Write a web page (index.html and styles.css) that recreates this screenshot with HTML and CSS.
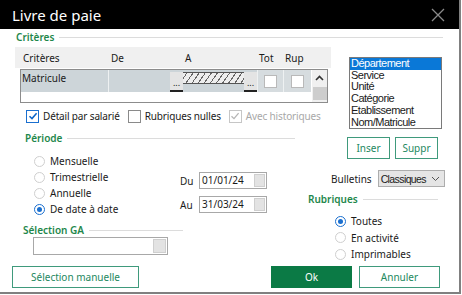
FILE: index.html
```html
<!DOCTYPE html>
<html lang="fr">
<head>
    <meta charset="UTF-8">
    <title>Livre de paie</title>
    <link rel="stylesheet" href="styles.css">
</head>
<body>
    <div class="window">
        <div class="titlebar">
            <span class="title">Livre de paie</span>
            <svg class="close" width="14" height="14" viewBox="0 0 14 14">
                <path d="M1 1 L13 13 M13 1 L1 13" stroke="#8a8a8a" stroke-width="1.3" fill="none"/>
            </svg>
        </div>

        <div class="content">
            <div class="group-head crit-head"><span>Critères</span></div>

            <!-- bloc critères -->
            <div class="block1">
                <div class="left1">
                    <div class="grid-head">
                        <div class="cell">Critères</div>
                        <div class="cell">De</div>
                        <div></div>
                        <div class="cell">A</div>
                        <div></div>
                        <div class="cell">Tot</div>
                        <div class="cell">Rup</div>
                        <div></div>
                    </div>
                    <div class="grid-box">
                        <div class="grid-row">
                            <div class="cell c-name">Matricule</div>
                            <div class="cell c-val"></div>
                            <div class="dots">...</div>
                            <div class="cell c-hatch"><div class="hatch"></div></div>
                            <div class="dots">...</div>
                            <div class="cell c-chk"><span class="box"></span></div>
                            <div class="cell c-chk"><span class="box"></span></div>
                        </div>
                        <div class="scroll">
                            <svg width="9" height="6" viewBox="0 0 9 6"><path d="M1 5 L4.5 1.5 L8 5" stroke="#333" stroke-width="1.6" fill="none"/></svg>
                            <div class="thumb"></div>
                        </div>
                    </div>
                    <div class="checks">
                        <label class="chk"><span class="cb on">
                            <svg width="10" height="10" viewBox="0 0 10 10"><path d="M1.5 5.2 L4 7.6 L8.6 2.2" stroke="#0a64c8" stroke-width="1.5" fill="none"/></svg>
                        </span>Détail par salarié</label>
                        <label class="chk"><span class="cb"></span>Rubriques nulles</label>
                        <label class="chk disabled"><span class="cb">
                            <svg width="10" height="10" viewBox="0 0 10 10"><path d="M1.5 5.2 L4 7.6 L8.6 2.2" stroke="#b5b5b5" stroke-width="1.3" fill="none"/></svg>
                        </span>Avec historiques</label>
                    </div>
                </div>
                <ul class="listbox">
                    <li class="sel">Département</li>
                    <li>Service</li>
                    <li>Unité</li>
                    <li>Catégorie</li>
                    <li>Etablissement</li>
                    <li>Nom/Matricule</li>
                </ul>
            </div>

            <!-- bloc période / rubriques -->
            <div class="block2">
                <div class="left2">
                    <div class="group-head periode-head"><span>Période</span></div>
                    <div class="periode">
                        <div class="radios">
                            <div class="radio"><span class="rd"></span>Mensuelle</div>
                            <div class="radio"><span class="rd"></span>Trimestrielle</div>
                            <div class="radio"><span class="rd"></span>Annuelle</div>
                            <div class="radio"><span class="rd on"></span>De date à date</div>
                        </div>
                        <div class="dates">
                            <div class="date-row"><span class="lbl">Du</span><div class="field">01/01/24<span class="fbtn"></span></div></div>
                            <div class="date-row"><span class="lbl">Au</span><div class="field">31/03/24<span class="fbtn"></span></div></div>
                        </div>
                    </div>
                    <div class="group-head ga-head"><span>Sélection GA</span></div>
                    <div class="field ga-field"><span class="fbtn"></span></div>
                </div>

                <div class="right2">
                    <div class="btns">
                        <button class="btn small">Inser</button>
                        <button class="btn small">Suppr</button>
                    </div>
                    <div class="bulletins">
                        <span>Bulletins</span>
                        <div class="select">Classiques
                            <svg width="9" height="6" viewBox="0 0 9 6"><path d="M1 1 L4.5 4.5 L8 1" stroke="#555" stroke-width="1" fill="none"/></svg>
                        </div>
                    </div>
                    <div class="group-head rub-head"><span>Rubriques</span></div>
                    <div class="rub-radios">
                        <div class="radio"><span class="rd on"></span>Toutes</div>
                        <div class="radio"><span class="rd"></span>En activité</div>
                        <div class="radio"><span class="rd"></span>Imprimables</div>
                    </div>
                </div>
            </div>

            <div class="bottom">
                <button class="btn manual">Sélection manuelle</button>
                <button class="btn ok">Ok</button>
                <button class="btn cancel">Annuler</button>
            </div>
        </div>
    </div>
</body>
</html>
```

FILE: styles.css
```css
body {
    margin: 0;
    background: #fff;
    font-family: "Noto Sans", "DejaVu Sans", sans-serif;
    font-size: 10px;
    color: #1a1a1a;
}

.window {
    width: 459px;
    height: 292px;
    border-right: 2px solid #808080;
    border-bottom: 2px solid #808080;
    overflow: hidden;
}

.titlebar {
    height: 29px;
    background: #000;
    display: flex;
    align-items: center;
    justify-content: space-between;
    padding: 0 14px 0 12px;
}

.title {
    color: #fff;
    font-size: 15px;
}

.content {
    padding-left: 12px;
}

/* titres de groupe verts avec une ligne */
.group-head {
    display: flex;
    align-items: center;
    color: #1e874b;
    font-weight: 600;
    height: 16px;
    white-space: nowrap;
}

.group-head::after {
    content: "";
    flex: 1;
    height: 1px;
    background: #dcdcdc;
    margin-left: 5px;
}

.crit-head {
    padding-left: 4px;
    margin-right: 16px;
}

.block1 {
    display: flex;
    margin-top: 2px;
    height: 83px;
}

.left1 {
    width: 316px;
    padding-left: 3px;
}

/* grille des critères */
.grid-head,
.grid-row {
    display: grid;
    grid-template-columns: 88px 61px 13px 61px 13px 26px 28px;
}

.grid-head {
    grid-template-columns: 88px 61px 13px 61px 13px 26px 28px 16px;
    background: #f0f0f0;
    height: 21px;
    align-items: center;
    padding-left: 6px;
}

.grid-head .cell {
    padding-left: 2px;
}

.grid-box {
    margin: 1px 0 0 5px;
    width: 306px;
    height: 32px;
    border: 1px solid #8c8c8c;
    display: flex;
}

.grid-row {
    height: 22px;
    background: #cdd5d9;
}

.c-name {
    padding: 1px 0 0 1px;
    border-right: 1px solid #eef1f2;
}

.dots {
    background: #e4e4e4;
    margin-top: 2px;
    font-size: 9px;
    line-height: 9px;
    display: flex;
    align-items: flex-end;
    justify-content: center;
    padding-bottom: 3px;
    border-bottom: 2px solid #222;
    box-sizing: border-box;
}

.c-hatch {
    padding-top: 2px;
}

.hatch {
    height: 10px;
    border-top: 1px solid #555;
    border-bottom: 1px solid #555;
    background: repeating-linear-gradient(-55deg, #eee 0 2px, #666 2px 3px, #eee 3px 5px);
}

.c-chk {
    display: flex;
    justify-content: center;
    padding-top: 5px;
    background: #d6dcdf;
    border-left: 1px solid #eef1f2;
}

.box {
    width: 11px;
    height: 11px;
    background: #fff;
    border: 1px solid #b9b9b9;
}

.scroll {
    width: 15px;
    margin-left: 1px;
    background: #f0f0f0;
    display: flex;
    flex-direction: column;
    align-items: center;
    padding-top: 5px;
    box-sizing: border-box;
}

.thumb {
    width: 14px;
    height: 13px;
    background: #cdcdcd;
    margin-top: 6px;
}

.checks {
    display: flex;
    margin: 6px 0 0 11px;
    white-space: nowrap;
    letter-spacing: -0.15px;
}

.chk {
    display: flex;
    align-items: center;
    margin-right: 8px;
}

.cb {
    width: 11px;
    height: 11px;
    border: 1px solid #8a8a8a;
    margin-right: 4px;
    display: flex;
    align-items: center;
    justify-content: center;
    background: #fff;
    flex: none;
}

.cb.on {
    border-color: #1a6fcf;
}

.chk.disabled {
    color: #a8a8a8;
}

.chk.disabled .cb {
    border-color: #c6c6c6;
}

/* liste */
.listbox {
    list-style: none;
    margin: 10px 0 0 18px;
    padding: 0;
    width: 91px;
    height: 70px;
    border: 1px solid #7a7a7a;
    font-family: "Liberation Sans", Arial, sans-serif;
    font-size: 11px;
    letter-spacing: -0.5px;
    line-height: 11.7px;
    white-space: nowrap;
}

.listbox li {
    padding-left: 1px;
}

.listbox .sel {
    background: #0a78d7;
    color: #fff;
}

.block2 {
    display: flex;
    height: 136px;
}

.left2 {
    width: 288px;
}

.periode-head {
    margin-top: 1px;
    padding-left: 13px;
    height: 14px;
    margin-right: 5px;
}

.periode {
    display: flex;
    margin-top: 8px;
}

.radios {
    width: 168px;
    padding-left: 22px;
    box-sizing: border-box;
}

.radio {
    display: flex;
    align-items: center;
    height: 16px;
    white-space: nowrap;
}

.rd {
    width: 9px;
    height: 9px;
    border: 1px solid #cfcfcf;
    border-radius: 50%;
    margin-right: 5px;
    position: relative;
    flex: none;
}

.rd.on {
    border-color: #1a6fcf;
}

.rd.on::after {
    content: "";
    position: absolute;
    left: 2px;
    top: 2px;
    width: 5px;
    height: 5px;
    border-radius: 50%;
    background: #1a6fcf;
}

.dates {
    margin-top: 19px;
}

.date-row {
    display: flex;
    align-items: center;
    margin-bottom: 7px;
}

.date-row .lbl {
    width: 19px;
}

.field {
    position: relative;
    width: 64px;
    height: 15px;
    border: 1px solid #a8a8a8;
    padding-left: 2px;
    line-height: 15px;
}

.fbtn {
    position: absolute;
    right: 1px;
    top: 1px;
    width: 11px;
    height: 13px;
    background: #e3e3e3;
    border: 1px solid #cfcfcf;
    box-sizing: border-box;
}

.ga-head {
    margin-top: 3px;
    padding-left: 11px;
    width: 160px;
    height: 14px;
}

.ga-field {
    margin-left: 21px;
    width: 131px;
    height: 16px;
}

.ga-field .fbtn {
    height: 14px;
    width: 13px;
}

/* colonne droite */
.right2 {
    width: 146px;
}

.btns {
    display: flex;
    margin: 7px 0 0 47px;
    gap: 5px;
}

.btn {
    font-family: "Noto Sans", "DejaVu Sans", sans-serif;
    font-size: 10px;
    background: #fff;
    color: #238860;
    border: 1px solid #3f9a7c;
    padding: 0;
    height: 22px;
}

.btn.small {
    width: 43px;
}

.bulletins {
    display: flex;
    align-items: center;
    margin: 11px 0 0 31px;
    gap: 6px;
}

.select {
    width: 67px;
    height: 17px;
    box-sizing: border-box;
    border: 1px solid #adadad;
    background: #e5e5e5;
    font-family: "Liberation Sans", Arial, sans-serif;
    font-size: 10.5px;
    letter-spacing: -0.6px;
    display: flex;
    align-items: center;
    justify-content: space-between;
    padding: 0 4px 0 2px;
    white-space: nowrap;
}

.rub-head {
    margin-top: 5px;
    padding-left: 8px;
    height: 14px;
    margin-right: 8px;
}

.rub-radios {
    margin: 7px 0 0 35px;
}

.rub-radios .radio {
    height: 16.5px;
}

.bottom {
    display: flex;
}

.manual {
    width: 127px;
    margin-right: 132px;
}

.ok {
    width: 81px;
    background: #0b7a45;
    border-color: #0b7a45;
    color: #fff;
    margin-right: 7px;
}

.cancel {
    width: 81px;
}
```
